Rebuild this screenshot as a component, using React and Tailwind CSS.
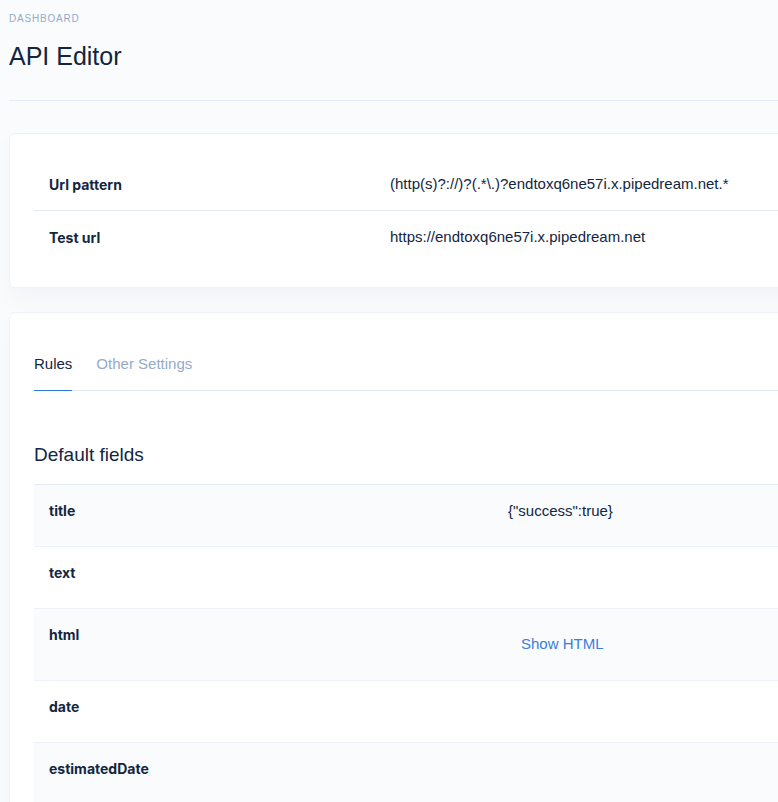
import React, { useState } from "react";

const base = { fontFamily: '"Liberation Sans", Arial, sans-serif' };
const labelFont = { fontFamily: 'Inter, "Liberation Sans", sans-serif' };

const settings = [
  { label: "Url pattern", value: "(http(s)?://)?(.*\\.)?endtoxq6ne57i.x.pipedream.net.*" },
  { label: "Test url", value: "https://endtoxq6ne57i.x.pipedream.net" },
];

const fields = [
  { name: "title", value: '{"success":true}' },
  { name: "text" },
  { name: "html", html: true },
  { name: "date" },
  { name: "estimatedDate" },
];

export default function App() {
  const [tab, setTab] = useState("rules");

  return (
    <div className="w-[778px] h-[802px] overflow-hidden bg-[#f9fbfd] text-[#12263f]" style={base}>
      <div className="w-[1100px] pl-[9px]">
        {/* header */}
        <div className="pt-[13px] pb-[29px] border-b border-[#e3ebf6] mb-[32px]">
          <p className="text-[10px] uppercase tracking-[0.08em] text-[#95aac9] leading-[12px]">Dashboard</p>
          <h1 className="text-[25px] leading-[30px] mt-[16px]">API Editor</h1>
        </div>

        {/* settings card */}
        <div className="bg-white border border-[#edf2f9] rounded-[6px] shadow-[0_12px_24px_rgba(18,38,63,0.03)] p-[24px]">
          {settings.map((s, i) => (
            <div key={s.label} className={`flex h-[52px] items-center ${i > 0 ? "border-t border-[#e3ebf6] h-[53px]" : ""}`}>
              <div className="w-[341px] px-[15px] text-[14px] font-bold" style={labelFont}>
                {s.label}
              </div>
              <div className="px-[15px] text-[15px]">{s.value}</div>
            </div>
          ))}
        </div>

        {/* rules card */}
        <div className="mt-[24px] bg-white border border-[#edf2f9] rounded-[6px] shadow-[0_12px_24px_rgba(18,38,63,0.03)] px-[24px] pt-[25px] pb-[24px]">
          <div className="flex gap-[24px] border-b border-[#e3ebf6]">
            <button
              onClick={() => setTab("rules")}
              className={`py-[15px] text-[15px] leading-[22px] -mb-px border-b ${tab === "rules" ? "text-[#12263f] border-[#2c7be5]" : "text-[#95aac9] border-transparent"}`}
            >
              Rules
            </button>
            <button
              onClick={() => setTab("other")}
              className={`py-[15px] text-[15px] leading-[22px] -mb-px border-b ${tab === "other" ? "text-[#12263f] border-[#2c7be5]" : "text-[#95aac9] border-transparent"}`}
            >
              Other Settings
            </button>
          </div>

          <h3 className="mt-[52px] text-[19px] leading-[24px]">Default fields</h3>

          <div className="mt-[17px] border-t border-[#e3ebf6]">
            {fields.map((f, i) => (
              <div
                key={f.name}
                className={`flex border-b border-[#edf2f9] ${i % 2 === 0 ? "bg-[#f9fbfd]" : "bg-white"} ${f.html ? "h-[72px]" : "h-[62px]"}`}
              >
                <div className="w-[459px] px-[15px] pt-[16px] text-[14px] leading-[20px] font-bold" style={labelFont}>
                  {f.name}
                </div>
                <div className="px-[15px] pt-[16px] text-[15px] leading-[20px]">
                  {f.value}
                  {f.html && (
                    <button className="mt-[4px] px-[13px] py-[5px] text-[15px] text-[#3b7ddd]">Show HTML</button>
                  )}
                </div>
              </div>
            ))}
          </div>
        </div>
      </div>
    </div>
  );
}
